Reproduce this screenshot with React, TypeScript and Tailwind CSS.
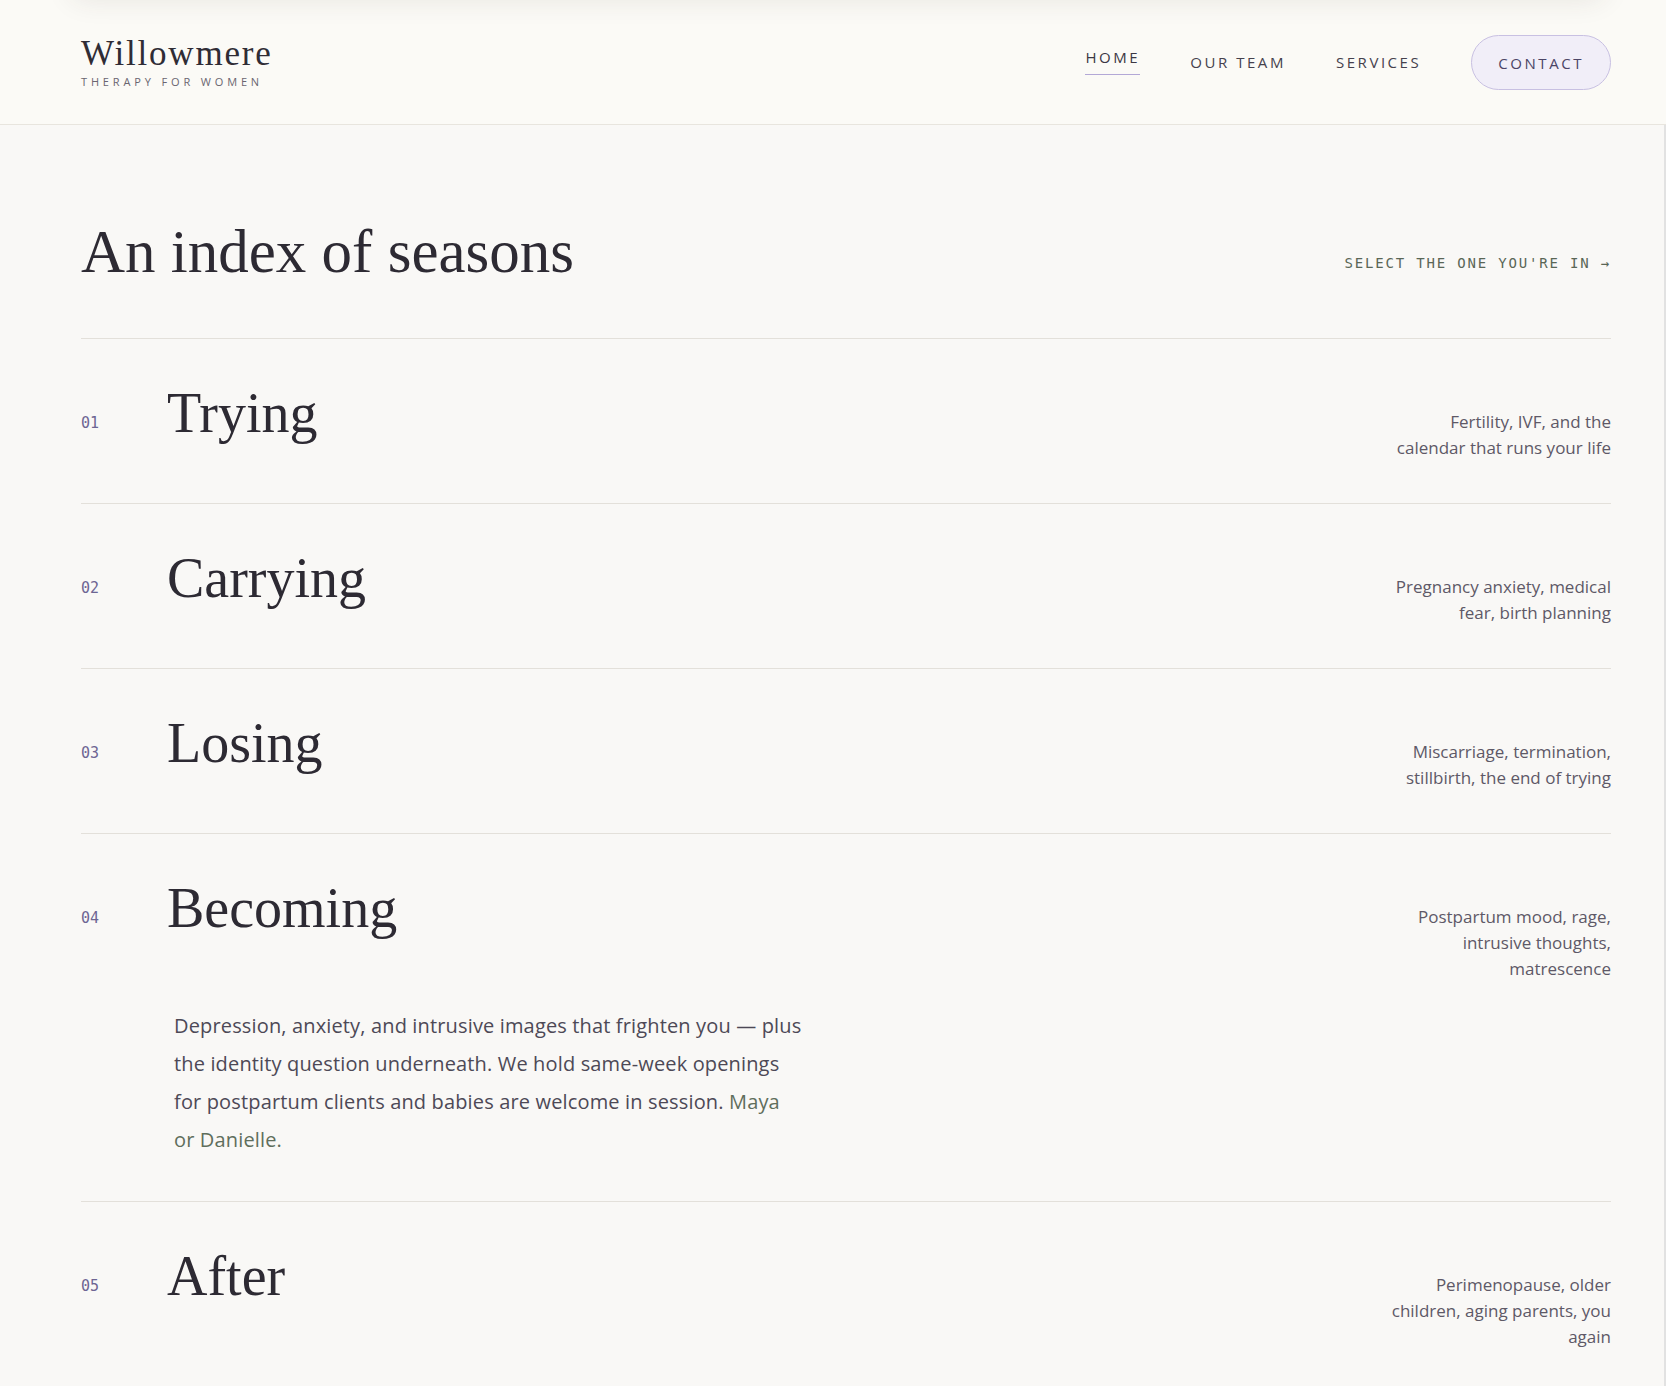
import React from "react";

const serif = "font-['Liberation_Serif','Times_New_Roman',serif]";
const sans = "font-['Open_Sans','Noto_Sans',sans-serif]";
const mono = "font-['DejaVu_Sans_Mono','Liberation_Mono',monospace]";

type Row = {
  n: string;
  title: string;
  desc: string[];
  expanded?: boolean;
};

const rows: Row[] = [
  { n: "01", title: "Trying", desc: ["Fertility, IVF, and the", "calendar that runs your life"] },
  { n: "02", title: "Carrying", desc: ["Pregnancy anxiety, medical", "fear, birth planning"] },
  { n: "03", title: "Losing", desc: ["Miscarriage, termination,", "stillbirth, the end of trying"] },
  {
    n: "04",
    title: "Becoming",
    desc: ["Postpartum mood, rage,", "intrusive thoughts,", "matrescence"],
    expanded: true,
  },
  { n: "05", title: "After", desc: ["Perimenopause, older", "children, aging parents, you", "again"] },
];

function SeasonRow({ row }: { row: Row }) {
  return (
    <div className="border-t border-[#e3e0da] pt-[46px] pb-[42px]">
      <div className="flex items-start">
        <span className={`${mono} w-[86px] shrink-0 mt-[31px] text-[15px] leading-none text-[#6d6593]`}>
          {row.n}
        </span>
        <h2 className={`${serif} flex-1 text-[56px] leading-none font-normal text-[#2d2a33]`}>
          {row.title}
        </h2>
        <p className={`${sans} mt-[24px] text-right text-[17px] leading-[26px] text-[#5e5967]`}>
          {row.desc.map((d) => (
            <span key={d} className="block">
              {d}
            </span>
          ))}
        </p>
      </div>
      {row.expanded && (
        <p className={`${sans} mt-[25px] ml-[93px] text-[20px] leading-[38px] tracking-[0.15px] text-[#4d4956]`}>
          <span className="block">Depression, anxiety, and intrusive images that frighten you — plus</span>
          <span className="block">the identity question underneath. We hold same-week openings</span>
          <span className="block">
            for postpartum clients and babies are welcome in session.{" "}
            <span className="text-[#5f6e5c]">Maya</span>
          </span>
          <span className="block">
            <span className="text-[#5f6e5c]">or Danielle.</span>
          </span>
        </p>
      )}
    </div>
  );
}

export default function App() {
  return (
    <div className={`${sans} min-h-screen bg-[#f9f8f6] overflow-hidden`}>
      <header className="relative h-[125px] bg-[#fbfaf6] border-b border-[#e8e5de] flex items-center justify-between pl-[81px] pr-[55px]">
        <div className="pointer-events-none absolute left-[70px] right-[60px] top-[-34px] h-[30px] rounded-full shadow-[0_4px_28px_rgba(60,50,40,0.10)]" />
        <div className="flex flex-col mt-[-2px]">
          <span className={`${serif} text-[35px] leading-none tracking-[1.8px] text-[#2f2c35]`}>
            Willowmere
          </span>
          <span className="mt-[5px] text-[11px] leading-none tracking-[0.35em] text-[#6a6570]">
            THERAPY FOR WOMEN
          </span>
        </div>
        <nav className="flex items-center gap-[50px]">
          <a className="pb-[9px] border-b border-[#b3a8d6] text-[15px] leading-none tracking-[0.17em] text-[#3b3744]">
            HOME
          </a>
          <a className="text-[15px] leading-none tracking-[0.17em] text-[#45414d]">OUR TEAM</a>
          <a className="text-[15px] leading-none tracking-[0.17em] text-[#45414d]">SERVICES</a>
          <a className="h-[55px] px-[26px] flex items-center pt-[3px] rounded-full border border-[#c8c0e2] bg-[#f1eef8] text-[15px] leading-none tracking-[0.17em] text-[#4b4566]">
            CONTACT
          </a>
        </nav>
      </header>

      <main className="border-r-2 border-[#e2e2e2] pl-[81px] pr-[53px]">
        <div className="pt-[96px] mb-[56px] flex items-end justify-between">
          <h1 className={`${serif} text-[61px] leading-none font-normal text-[#2d2a33]`}>
            An index of seasons
          </h1>
          <span className={`${mono} mb-[12px] text-[14px] leading-none tracking-[0.13em] text-[#5a6656]`}>
            SELECT THE ONE YOU'RE IN →
          </span>
        </div>
        {rows.map((r) => (
          <SeasonRow key={r.n} row={r} />
        ))}
      </main>
    </div>
  );
}
